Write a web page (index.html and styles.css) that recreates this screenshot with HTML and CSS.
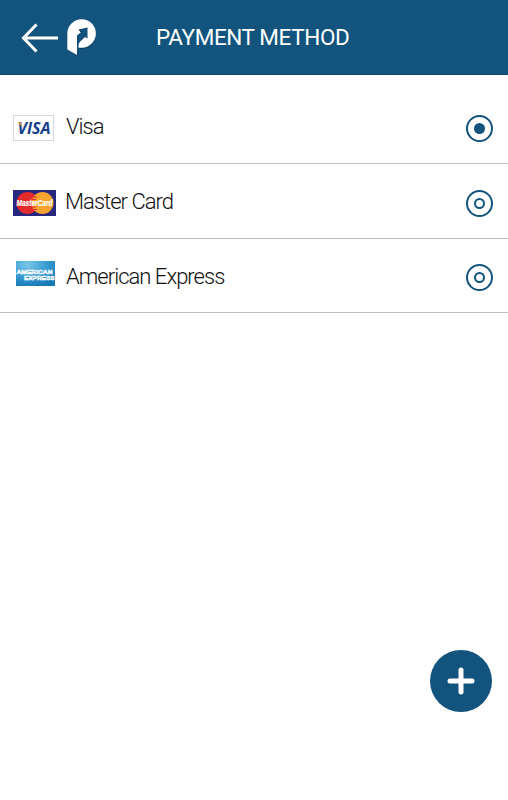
FILE: index.html
```html
<!DOCTYPE html>
<html lang="en">
<head>
    <meta charset="UTF-8">
    <title>Payment Method</title>
    <link rel="stylesheet" href="styles.css">
</head>
<body>
    <div class="header">
        <a href="#" class="back">
            <svg width="38" height="30" viewBox="0 0 38 30">
                <path d="M37 15H3M15.500 1.500L2.500 15L15.500 28.500" fill="none" stroke="#fff" stroke-width="3"/>
            </svg>
        </a>
        <svg class="logo" width="30" height="37" viewBox="0 0 30 37">
            <path class="logo-shadow" d="M0 31V15.500A14.500 14.500 0 1 1 15.500 30H12V26C12 22 14 20 18 17.500L20.500 20V9.500L13 10L15 13L10.500 17V37Z"/>
            <path d="M.3 30.500V14.500A14.300 14.300 0 1 1 14.800 28.800H11.500V26.500C11.500 23.500 14 21.500 18 18L20.500 19.500V8.500L11.500 10.500L13.800 13.500L10 16.500V36Z" fill="#fff"/>
        </svg>
        <h1>PAYMENT METHOD</h1>
    </div>
    <ul class="methods">
        <li class="method">
            <svg class="card" width="44" height="28" viewBox="0 0 44 28">
                <rect x=".5" y="1.500" width="40" height="25" fill="#fff" stroke="#d5d7da"/>
                <text class="visa-text" x="4.500" y="19.800" textLength="33" lengthAdjust="spacingAndGlyphs">VISA</text>
                <path d="M3.500 8.500H8L9.500 13.500C8 11 6.500 9.800 3.500 8.500Z" fill="#e8a73a"/>
            </svg>
            <span class="name">Visa</span>
            <span class="radio checked"></span>
        </li>
        <li class="method master">
            <svg class="card" width="44" height="28" viewBox="0 0 44 28">
                <rect x="0" y="1" width="43" height="26" fill="#27277f"/>
                <circle cx="14.500" cy="14" r="11" fill="#e32a2c"/>
                <circle cx="29.500" cy="14" r="11" fill="#f3a32f"/>
                <path d="M20 8H24M19 10.500H23M19 18H23M20 20.500H24" stroke="#e32a2c"/>
                <text class="master-text" x="3.500" y="17" textLength="36" lengthAdjust="spacingAndGlyphs">MasterCard</text>
            </svg>
            <span class="name">Master Card</span>
            <span class="radio"></span>
        </li>
        <li class="method amex">
            <svg class="card" width="44" height="28" viewBox="0 0 44 28">
                <defs>
                    <radialGradient id="amex" cx=".3" cy=".15" r=".9">
                        <stop offset="0" stop-color="#7cc8ea"/>
                        <stop offset=".5" stop-color="#3b9ed3"/>
                        <stop offset="1" stop-color="#1779b5"/>
                    </radialGradient>
                </defs>
                <rect x="3" y="1" width="39" height="25" fill="url(#amex)"/>
                <text class="amex-text" x="3.500" y="14" textLength="36" lengthAdjust="spacingAndGlyphs">AMERICAN</text>
                <text class="amex-text" x="11" y="19.500" textLength="30.500" lengthAdjust="spacingAndGlyphs">EXPRESS</text>
            </svg>
            <span class="name">American Express</span>
            <span class="radio"></span>
        </li>
    </ul>
    <a href="#" class="add">
        <svg width="28" height="28" viewBox="0 0 28 28">
            <path d="M14 3V25M3 14H25" stroke="#fff" stroke-width="5" stroke-linecap="round"/>
        </svg>
    </a>
</body>
</html>
```

FILE: styles.css
```css
* {
    box-sizing: border-box;
}
body {
    margin: 0;
    height: 800px;
    background: #fefefe;
    font-family: Roboto, sans-serif;
    overflow: hidden;
}
.header {
    display: flex;
    height: 75px;
    padding-left: 21px;
    background: #12547d;
    border-bottom: 1px solid #0b446b;
}
.back {
    width: 38px;
    height: 30px;
    margin-top: 23px;
}
.logo {
    margin: 19px 0 0 8px;
    overflow: visible;
}
.logo-shadow {
    fill: #0b3d60;
}
h1 {
    margin: 24px 0 0 59px;
    font-size: 22.5px;
    line-height: 27px;
    font-weight: 450;
    letter-spacing: -0.4px;
    white-space: nowrap;
    color: #fff;
}
.methods {
    margin: 0;
    padding: 14px 0 0;
    list-style: none;
}
.method {
    display: flex;
    align-items: center;
    height: 75px;
    padding: 0 15px 0 13px;
    border-bottom: 1px solid #bdbdbd;
}
.card {
    margin-top: 3px;
    overflow: visible;
}
.amex {
    height: 74px;
}
.amex .card {
    margin-top: -4px;
}
.name {
    margin: 2px 0 0 9px;
    font-size: 22px;
    line-height: 28px;
    font-weight: 300;
    letter-spacing: -0.97px;
    color: #111;
}
.master .name {
    margin-left: 8px;
}
.radio {
    position: relative;
    width: 27px;
    height: 27px;
    margin: 4px 0 0 auto;
    border: 2px solid #12547d;
    border-radius: 50%;
}
.radio:after {
    content: "";
    position: absolute;
    top: 6px;
    left: 6px;
    width: 7px;
    height: 7px;
    border: 2px solid #12547d;
    border-radius: 50%;
}
.checked:after {
    background: #12547d;
}
.add {
    position: absolute;
    top: 650px;
    left: 430px;
    display: flex;
    align-items: center;
    justify-content: center;
    width: 62px;
    height: 62px;
    border-radius: 50%;
    background: #12547d;
}
.visa-text {
    font: italic bold 16px "Open Sans", sans-serif;
    fill: #17408b;
}
.master-text {
    font: italic bold 8.5px "Liberation Sans", sans-serif;
    fill: #fff;
    stroke: #fff;
    stroke-width: .2px;
}
.amex-text {
    font: bold 6px "Liberation Sans", sans-serif;
    fill: #3b9ed3;
    stroke: #fff;
    stroke-width: .6px;
}
```
